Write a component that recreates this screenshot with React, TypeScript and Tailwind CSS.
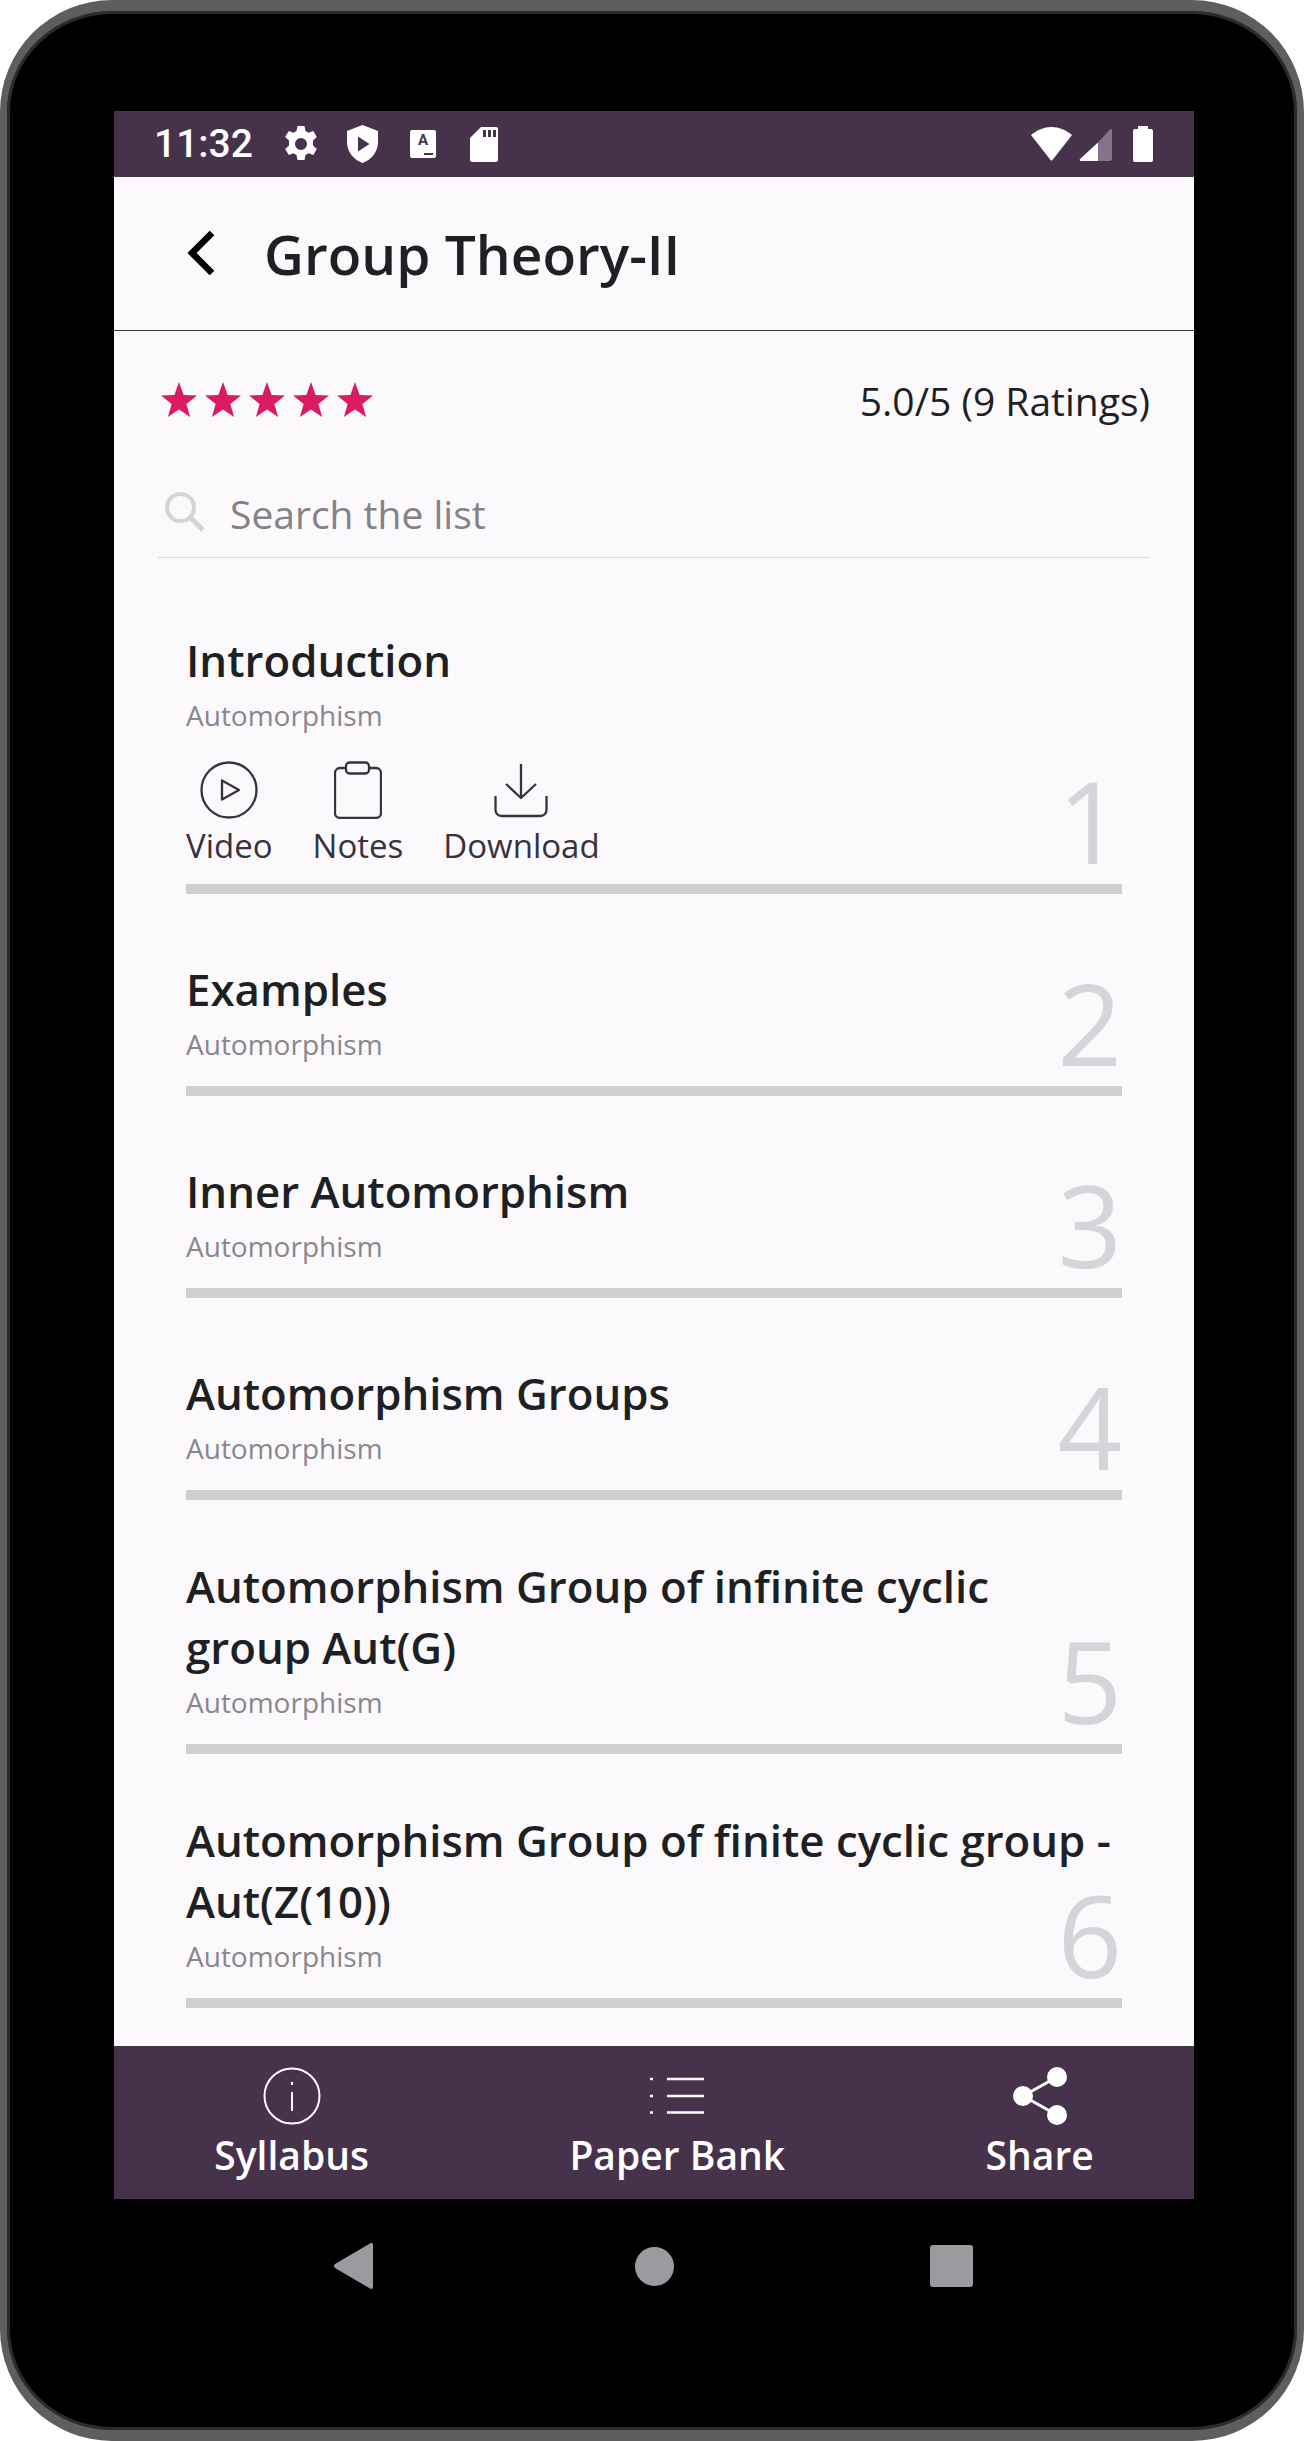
const SANS = "font-['Open_Sans',sans-serif]"

const LESSONS = [
  { id: 1, title: 'Introduction', expanded: true },
  { id: 2, title: 'Examples' },
  { id: 3, title: 'Inner Automorphism' },
  { id: 4, title: 'Automorphism Groups' },
  { id: 5, title: 'Automorphism Group of infinite cyclic group Aut(G)' },
  { id: 6, title: 'Automorphism Group of finite cyclic group - Aut(Z(10))' },
]

function Star() {
  return (
    <svg viewBox="0 0 36 35" className="w-[36px] h-[35px]" fill="#db1b5f">
      <path d="M18 0l4.6 12.9 13.4.5-10.6 8.5 3.7 13.1L18 27.4 6.9 35l3.7-13.1L0 13.4l13.4-.5z" />
    </svg>
  )
}

function StatusIcons() {
  return (
    <div className="flex items-center">
      {/* gear */}
      <svg viewBox="0 0 34 36" className="ml-[31px] w-[34px] h-[36px]" fill="#fff">
        <path fillRule="evenodd" d="M13.5 0h7l1 5 3 1.700 4.800-1.600 3.500 6-3.800 3.400v5l3.800 3.400-3.500 6-4.800-1.600-3 1.700-1 5h-7l-1-5-3-1.700-4.800 1.600-3.500-6 3.800-3.400v-5L1.200 11.100l3.500-6 4.800 1.600 3-1.700zM17 12a6 6 0 100 12 6 6 0 000-12z" />
      </svg>
      {/* shield with play */}
      <svg viewBox="0 0 31 38" className="ml-[29px] w-[31px] h-[38px]">
        <path fill="#fff" d="M15.500 0L31 6v11c0 10-6.500 17.500-15.500 21C6.500 34.500 0 27 0 17V6z" />
        <path fill="#46334b" d="M11 11.500L22.500 19 11 26.500z" />
      </svg>
      {/* auto-fill box */}
      <div className="ml-[32px] w-[26px] h-[28px] bg-white rounded-[2px] relative flex justify-center">
        <span className="font-['Roboto',sans-serif] font-bold text-[15px] leading-[20px] text-[#46334b]">A</span>
        <span className="absolute right-[3px] bottom-[3px] w-[9px] h-[2px] bg-[#46334b]" />
      </div>
      {/* sd card */}
      <svg viewBox="0 0 28 35" className="ml-[34px] w-[28px] h-[35px]">
        <path fill="#fff" d="M11 0h15a2 2 0 012 2v31a2 2 0 01-2 2H2a2 2 0 01-2-2V11z" />
        <path fill="#46334b" d="M13 3h3v7h-3zM18 3h3v7h-3zM23 3h3v7h-3z" />
      </svg>
    </div>
  )
}

function StatusRight() {
  return (
    <div className="flex items-center">
      <svg viewBox="0 0 41 34" className="w-[41px] h-[34px]" fill="#fff">
        <path d="M0 8C6 3 13 0 20.500 0S35 3 41 8L21.500 33a1.300 1.300 0 01-2 0z" />
      </svg>
      <svg viewBox="0 0 33 33" className="ml-[7px] w-[33px] h-[33px]">
        <path fill="#fff" d="M19 14.500V33H2a1.200 1.200 0 01-1-2z" />
        <path fill="#85748a" d="M19 14.500L31 1.500c.8-.8 2-.3 2 .8V31a2 2 0 01-2 2H19z" />
      </svg>
      <svg viewBox="0 0 20 36" className="ml-[21px] w-[20px] h-[36px]" fill="#fff">
        <path d="M5 0h10v3h3a2 2 0 012 2v29a2 2 0 01-2 2H2a2 2 0 01-2-2V5a2 2 0 012-2h3z" />
      </svg>
    </div>
  )
}

function ActionRow() {
  const label = 'text-[33px] leading-[54px] text-[#38313e]'
  return (
    <div className="flex mt-[26px] gap-[40px] pb-[11px]">
      <div className="flex flex-col items-center">
        <svg viewBox="0 0 58 58" className="w-[58px] h-[58px]" fill="none" stroke="#38313e" strokeWidth="2.300" strokeLinejoin="round">
          <circle cx="29" cy="29" r="27.500" />
          <path d="M22 19.500L39 29 22 38.500z" />
        </svg>
        <span className={label}>Video</span>
      </div>
      <div className="flex flex-col items-center">
        <svg viewBox="0 0 48 58" className="w-[48px] h-[58px]" fill="none" stroke="#38313e" strokeWidth="2.300">
          <path d="M13 7H6a5 5 0 00-5 5v40a5 5 0 005 5h36a5 5 0 005-5V12a5 5 0 00-5-5h-7" />
          <rect x="12" y="1.500" width="23" height="11" rx="3.500" />
        </svg>
        <span className={label}>Notes</span>
      </div>
      <div className="flex flex-col items-center">
        <svg viewBox="0 0 54 58" className="w-[54px] h-[58px]" fill="none" stroke="#38313e" strokeWidth="2.300" strokeLinejoin="round">
          <path d="M27 3v34M12 23l15 14 15-14" />
          <path d="M1.500 35v14a6 6 0 006 6h39a6 6 0 006-6V35" />
        </svg>
        <span className={label}>Download</span>
      </div>
    </div>
  )
}

function LessonItem({ id, title, expanded }: { id: number; title: string; expanded?: boolean }) {
  return (
    <div className={`relative flex flex-col justify-end ${expanded ? 'pt-[72px]' : 'min-h-[202px] pt-[56px]'}`}>
      <h3 className="font-semibold text-[43.8px] leading-[61px] text-[#201f23]">{title}</h3>
      <p className="mt-[4px] text-[28px] leading-[40px] text-[#8a878c]">Automorphism</p>
      {expanded ? <ActionRow /> : <div className="h-[22px]" />}
      <div className="h-[10px] bg-[#d0ced1]" />
      <span className="absolute right-0 bottom-[17px] text-[113px] leading-none text-[#d6d4d8]">{id}</span>
    </div>
  )
}

function BottomNav() {
  const label = 'text-[39px] leading-[60px] font-semibold text-white'
  return (
    <div className="h-[153px] bg-[#46334b] flex justify-around pt-[21px]">
      <div className="flex flex-col items-center">
        <svg viewBox="0 0 58 58" className="w-[58px] h-[58px]" fill="none" stroke="#fff" strokeWidth="2">
          <circle cx="29" cy="29" r="27.500" />
          <path d="M29 25v19M29 15v3" />
        </svg>
        <span className={label}>Syllabus</span>
      </div>
      <div className="flex flex-col items-center">
        <svg viewBox="0 0 54 58" className="w-[54px] h-[58px]" fill="none" stroke="#fff" strokeWidth="2.500">
          <path d="M0 12h3M0 29h3M0 45.500h3" />
          <path d="M17 12h37M17 29h37M17 45.500h37" />
        </svg>
        <span className={label}>Paper Bank</span>
      </div>
      <div className="flex flex-col items-center">
        <svg viewBox="0 0 54 58" className="w-[54px] h-[58px]" fill="#fff" stroke="#fff">
          <path d="M10 29L44 10M10 29l34 19" strokeWidth="3" />
          <circle cx="10" cy="29" r="10" stroke="none" />
          <circle cx="44" cy="10" r="10" stroke="none" />
          <circle cx="44" cy="48" r="10" stroke="none" />
        </svg>
        <span className={label}>Share</span>
      </div>
    </div>
  )
}

export default function App() {
  return (
    <div className={`w-[1304px] h-[2441px] bg-white ${SANS}`}>
      <div className="h-full bg-black rounded-[112px] border-x-[7px] border-t-[11px] border-b-[11px] border-[#5e5d60] shadow-[inset_0_0_0_3px_#2c2b2e] pt-[100px] pl-[107px] pr-[103px]">
        <div className="bg-[#fbf9fc] h-[2088px] flex flex-col">
          {/* status bar */}
          <div className="h-[66px] bg-[#46334b] flex items-center justify-between pl-[40px] pr-[41px]">
            <div className="flex items-center">
              <span className="font-['Roboto',sans-serif] font-medium text-[39px] leading-none text-white">11:32</span>
              <StatusIcons />
            </div>
            <StatusRight />
          </div>

          {/* app bar */}
          <div className="h-[154px] border-b border-[#3d3a40] flex items-center pl-[73px]">
            <svg viewBox="0 0 28 44" className="w-[28px] h-[44px] -mt-[2px]" fill="none" stroke="#000" strokeWidth="6.500">
              <path d="M25 2L5 22l20 20" />
            </svg>
            <h1 className="ml-[49px] text-[55px] leading-none font-semibold text-[#201f23]">Group Theory-II</h1>
          </div>

          {/* rating */}
          <div className="flex items-center justify-between pl-[47px] pr-[44px] mt-[50px]">
            <div className="flex gap-[8px] -mt-[3px]">
              <Star /><Star /><Star /><Star /><Star />
            </div>
            <span className="text-[39px] leading-[40px] text-[#201f23]">5.0/5 (9 Ratings)</span>
          </div>

          {/* search */}
          <div className="mx-[44px] mt-[71px] h-[66px] border-b border-[#dcdadd] flex items-start">
            <svg viewBox="0 0 40 40" className="ml-[7px] w-[40px] h-[40px]" fill="none" stroke="#d5d3d6">
              <circle cx="15.500" cy="15.500" r="13.500" strokeWidth="4" />
              <path d="M25 25l13 13" strokeWidth="5" />
            </svg>
            <span className="ml-[25px] text-[39px] leading-[44px] text-[#858287]">Search the list</span>
          </div>

          {/* lessons */}
          <div className="mx-[72px]">
            {LESSONS.map((l) => (
              <LessonItem key={l.id} id={l.id} title={l.title} expanded={l.expanded} />
            ))}
          </div>

          <div className="flex-1" />
          <BottomNav />
        </div>

        {/* android nav */}
        <div className="flex items-center pl-[220px] mt-[44px]">
          <svg viewBox="0 0 39 46" className="w-[39px] h-[46px]" fill="#9c9a9e">
            <path d="M36 .500c1.500-1 3-.5 3 1.500v42c0 2-1.500 2.500-3 1.500L1 25c-1.300-1-1.300-3 0-4z" />
          </svg>
          <div className="ml-[262px] w-[39px] h-[39px] rounded-full bg-[#9c9a9e]" />
          <div className="ml-[256px] w-[43px] h-[42px] rounded-[3px] bg-[#9c9a9e]" />
        </div>
      </div>
    </div>
  )
}
